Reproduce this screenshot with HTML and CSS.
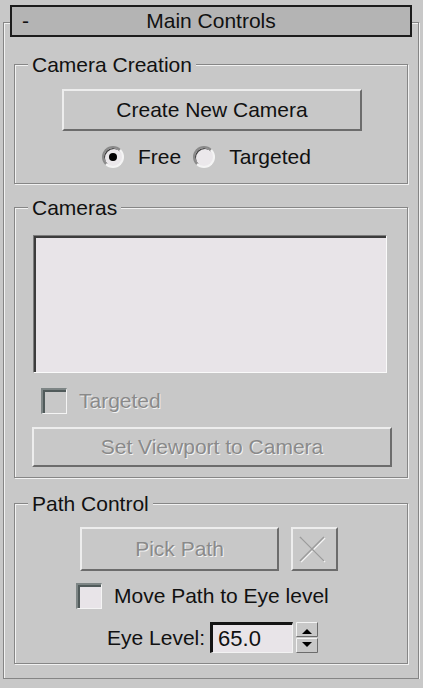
FILE: index.html
```html
<!DOCTYPE html>
<html lang="en">
<head>
    <meta charset="UTF-8">
    <meta name="viewport" content="width=device-width, initial-scale=1.0">
    <title>Main Controls</title>
    <link rel="stylesheet" href="styles.css">
</head>
<body>
    <div class="rollout">
        <div class="rollout-title">
            <span class="toggle">-</span>
            <span class="title">Main Controls</span>
            <span></span>
        </div>

        <div class="group group-creation">
            <div class="group-label">Camera Creation</div>
            <button class="btn btn-create">Create New Camera</button>
            <div class="radio-row">
                <label class="radio"><span class="radio-mark checked"></span>Free</label>
                <label class="radio"><span class="radio-mark"></span>Targeted</label>
            </div>
        </div>

        <div class="group group-cameras">
            <div class="group-label">Cameras</div>
            <div class="listbox"></div>
            <label class="check check-targeted disabled"><span class="check-box"></span>Targeted</label>
            <button class="btn btn-viewport" disabled>Set Viewport to Camera</button>
        </div>

        <div class="group group-path">
            <div class="group-label">Path Control</div>
            <div class="pick-row">
                <button class="btn btn-pick" disabled>Pick Path</button>
                <button class="btn btn-clear" disabled>
                    <svg width="43" height="40" viewBox="0 0 43 40">
                        <path d="M7 8L31 32M31 8L7 32" stroke="#f4f4f4" stroke-width="1.6" transform="translate(1 1)"/>
                        <path d="M7 8L31 32M31 8L7 32" stroke="#9c9c9c" stroke-width="1.6"/>
                    </svg>
                </button>
            </div>
            <label class="check check-move"><span class="check-box"></span>Move Path to Eye level</label>
            <div class="eye-row">
                <span class="eye-label">Eye Level:</span>
                <input class="spin-input" type="text" value="65.0">
                <svg class="spinner" width="22" height="31" viewBox="0 0 22 31">
                    <path d="M0.5 14.5V0.5H21.5" stroke="#f4f4f4" fill="none"/>
                    <path d="M21.5 0.5V14.5H0.5" stroke="#6c6c6c" fill="none"/>
                    <path d="M0.5 30.5V16.5H21.5" stroke="#f4f4f4" fill="none"/>
                    <path d="M21.5 16.5V30.5H0.5" stroke="#6c6c6c" fill="none"/>
                    <path d="M6 12L16 12L11 7Z" fill="#000"/>
                    <path d="M6 20L16 20L11 25Z" fill="#000"/>
                </svg>
            </div>
        </div>
    </div>
</body>
</html>
```

FILE: styles.css
```css
body {
    margin: 0;
    background-color: #c8c8c8;
    font-family: 'Liberation Sans', Arial, sans-serif;
    font-size: 21px;
    color: #111;
}

/* rollout frame */
.rollout {
    width: 414px;
    margin: 22px 0 0 3px;
    border: 1px solid #858585;
    box-shadow: inset 1px 1px 0 #f2f2f2, 1px 1px 0 #f2f2f2;
    padding-bottom: 14px;
}
.rollout-title {
    display: grid;
    grid-template-columns: 1fr auto 1fr;
    align-items: center;
    height: 28px;
    margin: -18px 6px 0;
    padding: 0 10px;
    border: 2px solid #1c1c1c;
    background-color: #b4b4b4;
}
.toggle {
    line-height: 24px;
}
.title {
    line-height: 24px;
}

/* group boxes */
.group {
    margin: 27px 10px 0;
    border: 1px solid #868686;
    box-shadow: inset 1px 1px 0 #f2f2f2, 1px 1px 0 #f2f2f2;
    padding-bottom: 14px;
}
.group-cameras {
    margin-top: 23px;
    padding-bottom: 10px;
}
.group-path {
    margin-top: 25px;
    padding-bottom: 10px;
}
.group-label {
    width: fit-content;
    margin: -12px 0 0 13px;
    padding: 0 4px;
    line-height: 24px;
    background-color: #c8c8c8;
}

/* buttons */
.btn {
    display: block;
    box-sizing: border-box;
    padding: 0;
    font: inherit;
    color: #111;
    background-color: #c8c8c8;
    border: 2px solid;
    border-color: #ededed #6c6c6c #6c6c6c #ededed;
}
.btn:disabled {
    color: #8a8a8a;
    text-shadow: 1px 1px 0 #f2f2f2;
}
.btn-create {
    width: 300px;
    height: 42px;
    margin: 12px 0 0 47px;
}
.btn-viewport {
    width: 360px;
    height: 40px;
    margin: 13px 0 0 17px;
}
.pick-row {
    display: flex;
    gap: 12px;
    margin: 11px 0 0 65px;
}
.btn-pick {
    width: 199px;
    height: 44px;
}
.btn-clear {
    width: 47px;
    height: 44px;
}
.btn-clear svg {
    display: block;
}

/* radios */
.radio-row {
    display: flex;
    align-items: center;
    gap: 12px;
    height: 24px;
    margin: 14px 0 0 87px;
}
.radio {
    display: flex;
    align-items: center;
    gap: 14px;
}
.radio-mark {
    display: flex;
    align-items: center;
    justify-content: center;
    box-sizing: border-box;
    width: 22px;
    height: 22px;
    border-radius: 50%;
    border: 2px solid;
    border-color: #8a8a8a #f4f4f4 #f4f4f4 #8a8a8a;
    background-color: #ebe8eb;
    box-shadow: inset 1px 1px 0 #404040;
}
.radio-mark.checked::after {
    content: "";
    width: 8px;
    height: 8px;
    border-radius: 50%;
    background-color: #000;
}

/* list box */
.listbox {
    box-sizing: border-box;
    width: 354px;
    height: 138px;
    margin: 15px 0 0 18px;
    background-color: #e8e4e8;
    border: 1px solid;
    border-color: #7c7c7c #fafafa #fafafa #7c7c7c;
    box-shadow: inset 2px 2px 0 #3c3c3c;
}

/* checkboxes */
.check {
    display: flex;
    align-items: center;
    gap: 12px;
    height: 26px;
}
.check-box {
    box-sizing: border-box;
    width: 26px;
    height: 26px;
    border-style: solid;
    border-width: 2px 1px 1px 2px;
    border-color: #7d8585 #f4f4f4 #f4f4f4 #7d8585;
    box-shadow: inset 2px 2px 0 #505a5a;
    background-color: #e8e4e8;
}
.check.disabled {
    color: #8a8a8a;
    text-shadow: 1px 1px 0 #f2f2f2;
}
.check.disabled .check-box {
    background-color: #c8c8c8;
}
.check-targeted {
    margin: 15px 0 0 26px;
}
.check-move {
    margin: 12px 0 0 61px;
}

/* eye level spinner */
.eye-row {
    display: flex;
    align-items: center;
    height: 31px;
    margin: 13px 0 0 92px;
}
.eye-label {
    margin-right: 5px;
}
.spin-input {
    box-sizing: border-box;
    width: 83px;
    height: 31px;
    padding: 0 0 0 5px;
    font: inherit;
    font-size: 22px;
    color: #111;
    background-color: #e8e4e8;
    border-style: solid;
    border-width: 3px 1px 1px 3px;
    border-color: #141414 #f2f2f2 #f2f2f2 #141414;
    outline: none;
}
.spinner {
    display: block;
    margin-left: 3px;
}
```
